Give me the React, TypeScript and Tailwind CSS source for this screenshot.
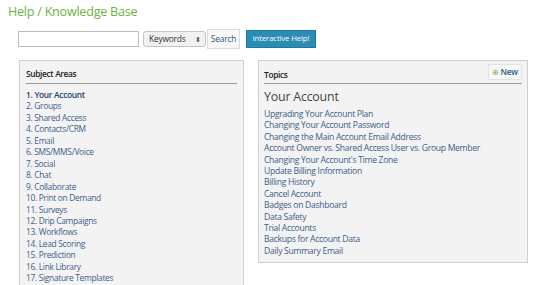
import React from "react";

const subjects = [
  "Your Account",
  "Groups",
  "Shared Access",
  "Contacts/CRM",
  "Email",
  "SMS/MMS/Voice",
  "Social",
  "Chat",
  "Collaborate",
  "Print on Demand",
  "Surveys",
  "Drip Campaigns",
  "Workflows",
  "Lead Scoring",
  "Prediction",
  "Link Library",
  "Signature Templates",
];

const topics = [
  "Upgrading Your Account Plan",
  "Changing Your Account Password",
  "Changing the Main Account Email Address",
  "Account Owner vs. Shared Access User vs. Group Member",
  "Changing Your Account's Time Zone",
  "Update Billing Information",
  "Billing History",
  "Cancel Account",
  "Badges on Dashboard",
  "Data Safety",
  "Trial Accounts",
  "Backups for Account Data",
  "Daily Summary Email",
];

export default function App() {
  return (
    <div
      className="w-[535px] h-[285px] overflow-hidden bg-white"
      style={{ fontFamily: '"Open Sans", "Noto Sans", sans-serif' }}
    >
      <h1 className="pl-[8px] pt-[3px] text-[12.6px] leading-[18px] tracking-[-0.25px] text-[#6ab23e]">
        Help / Knowledge Base
      </h1>
      <div className="flex items-center pl-[18px] mt-[8px] h-[20px]">
        <input className="w-[121px] h-[16px] border border-[#bdbdbd] bg-white" />
        <div className="ml-[4px] w-[63px] h-[16px] border border-[#c4c4c4] rounded-[3px] bg-[#f1f1f1] flex items-center justify-between pl-[5px] pr-[4px] text-[8.4px] tracking-[-0.2px] text-[#333]">
          <span>Keywords</span>
          <span className="text-[7px] leading-[7px] text-[#555]">⬍</span>
        </div>
        <div className="ml-[1px] h-[20px] w-[33px] border border-[#dcdcdc] bg-[#f8f8f8] flex items-center justify-center text-[8.4px] tracking-[-0.2px] text-[#2c5b80]">
          Search
        </div>
        <div className="ml-[6px] h-[18px] w-[70px] border border-[#1d7a9e] bg-[#2b8db4] flex items-center justify-center text-[7.8px] tracking-[-0.15px] text-white">
          Interactive Help!
        </div>
      </div>
      <div className="flex items-start mt-[11px]">
        <div className="ml-[19px] w-[225px] h-[240px] border border-[#cfcfcf] bg-[#f3f3f3] px-[6px] pt-[6px]">
          <div className="text-[8.4px] leading-[14px] tracking-[-0.35px] font-semibold text-[#222]">Subject Areas</div>
          <div className="border-b border-[#9a9a9a] mt-[2px] mb-[5px]" />
          {subjects.map((s, i) => (
            <div
              key={s}
              className={
                "text-[8.4px] leading-[11.45px] tracking-[-0.3px] " +
                (i === 0 ? "font-semibold text-[#1f3f66]" : "text-[#3d6089]")
              }
            >
              {i + 1}. {s}
            </div>
          ))}
        </div>
        <div className="ml-[14px] w-[270px] h-[203px] border border-[#cfcfcf] bg-[#f3f3f3] px-[5px] pt-[1px]">
          <div className="flex items-end justify-between h-[19px]">
            <div className="text-[8.4px] leading-[14px] tracking-[-0.35px] font-semibold text-[#222] mb-[-1px]">Topics</div>
            <div className="h-[16px] px-[3px] mb-[1px] bg-[#f8f8f8] border border-[#e2e2e2] flex items-center text-[8.4px] tracking-[-0.2px] font-semibold text-[#2c5b80]">
              <span className="text-[#6cb33f] text-[8px] mr-[2px] font-normal">⊕</span>New
            </div>
          </div>
          <div className="border-b border-[#9a9a9a] mt-[2px]" />
          <div className="text-[12.4px] leading-[16px] tracking-[-0.2px] text-[#444] mt-[5px] mb-[4px]">Your Account</div>
          {topics.map((t) => (
            <div key={t} className="text-[8.6px] leading-[11.4px] tracking-[-0.3px] text-[#3d6089]">
              {t}
            </div>
          ))}
        </div>
      </div>
    </div>
  );
}
